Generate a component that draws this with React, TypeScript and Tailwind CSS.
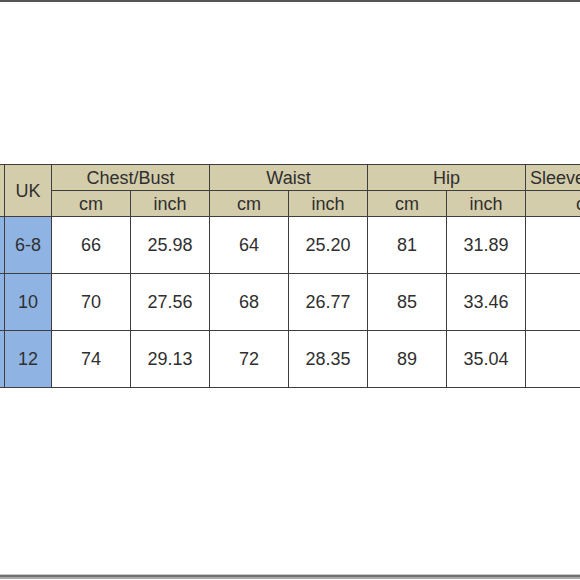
import { Fragment } from "react";

const rows = [
  { uk: "6-8", vals: ["66", "25.98", "64", "25.20", "81", "31.89", ""] },
  { uk: "10", vals: ["70", "27.56", "68", "26.77", "85", "33.46", ""] },
  { uk: "12", vals: ["74", "29.13", "72", "28.35", "89", "35.04", ""] },
];

const groups = ["Chest/Bust", "Waist", "Hip"];

const head = "bg-[#d4cdab] flex items-center justify-center pt-[2px]";

export default function App() {
  return (
    <div className="w-[580px] h-[580px] bg-white overflow-hidden flex flex-col text-[18px] text-[#2f2f2f] font-['Liberation_Sans',Arial,sans-serif]">
      <div className="h-[2px] bg-[#555]" />
      <div className="flex-1 pt-[162px] overflow-hidden">
        <div className="ml-[-37px] w-max bg-[#3e3e3e] p-px">
          <div className="grid gap-px grid-cols-[40px_46px_78px_78px_78px_78px_78px_78px_124px] grid-rows-[25px_25px_56px_56px_56px]">
            <div className={`${head} row-span-2`} />
            <div className={`${head} row-span-2`}>UK</div>
            {groups.map((g) => (
              <div key={g} className={`${head} col-span-2`}>
                {g}
              </div>
            ))}
            <div className={`${head} justify-start pl-[4px]`}>Sleeve Length</div>
            {groups.map((g) => (
              <Fragment key={g}>
                <div className={head}>cm</div>
                <div className={head}>inch</div>
              </Fragment>
            ))}
            <div className={head}>cm</div>
            {rows.map((r) => (
              <Fragment key={r.uk}>
                <div className="bg-[#8fb4e3]" />
                <div className="bg-[#8fb4e3] flex items-center justify-center">{r.uk}</div>
                {r.vals.map((v, i) => (
                  <div key={i} className="bg-white flex items-center justify-center">
                    {v}
                  </div>
                ))}
              </Fragment>
            ))}
          </div>
        </div>
      </div>
      <div className="h-px bg-[#cacaca]" />
      <div className="h-[2px] bg-[#6f6f6f]" />
      <div className="h-[2px] bg-[#a9a9a9]" />
      <div className="h-px bg-white" />
    </div>
  );
}
